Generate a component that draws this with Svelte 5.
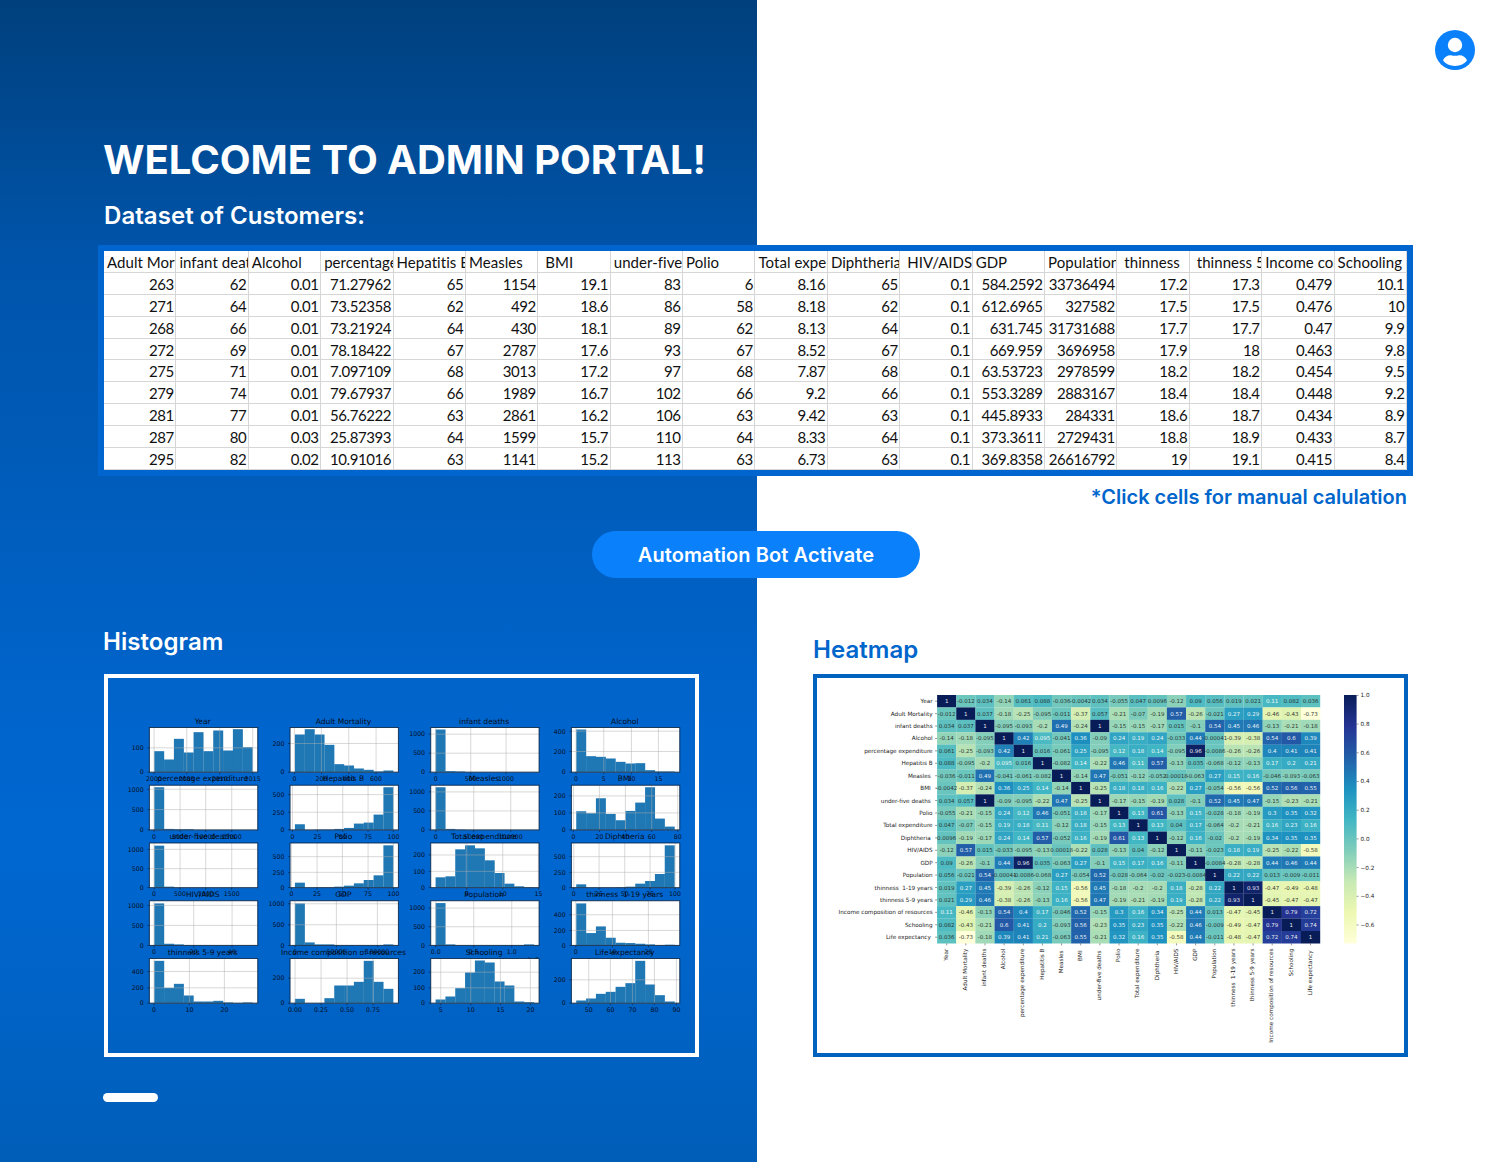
<script>
  const headers = ['Adult Mortality', 'infant deaths', 'Alcohol', 'percentage expenditure', 'Hepatitis B', 'Measles', ' BMI', 'under-five deaths', 'Polio', 'Total expenditure', 'Diphtheria ', ' HIV/AIDS', 'GDP', 'Population', ' thinness', ' thinness 5-9 years', 'Income composition', 'Schooling'];
  const rows = [
    '263 62 0.01 71.27962 65 1154 19.1 83 6 8.16 65 0.1 584.2592 33736494 17.2 17.3 0.479 10.1',
    '271 64 0.01 73.52358 62 492 18.6 86 58 8.18 62 0.1 612.6965 327582 17.5 17.5 0.476 10',
    '268 66 0.01 73.21924 64 430 18.1 89 62 8.13 64 0.1 631.745 31731688 17.7 17.7 0.47 9.9',
    '272 69 0.01 78.18422 67 2787 17.6 93 67 8.52 67 0.1 669.959 3696958 17.9 18 0.463 9.8',
    '275 71 0.01 7.097109 68 3013 17.2 97 68 7.87 68 0.1 63.53723 2978599 18.2 18.2 0.454 9.5',
    '279 74 0.01 79.67937 66 1989 16.7 102 66 9.2 66 0.1 553.3289 2883167 18.4 18.4 0.448 9.2',
    '281 77 0.01 56.76222 63 2861 16.2 106 63 9.42 63 0.1 445.8933 284331 18.6 18.7 0.434 8.9',
    '287 80 0.03 25.87393 64 1599 15.7 110 64 8.33 64 0.1 373.3611 2729431 18.8 18.9 0.433 8.7',
    '295 82 0.02 10.91016 63 1141 15.2 113 63 6.73 63 0.1 369.8358 26616792 19 19.1 0.415 8.4'
  ].map((r) => r.split(' '));

  // Each plot: title, bar heights, x ticks, y ticks.
  const plots = [
    { t: 'Year', b: [63, 38, 100, 59, 120, 63, 125, 65, 129, 75], x: [[14, '2000'], [112, '2005'], [211, '2010'], [310, '2015']], y: [[0, '0'], [73, '100']] },
    { t: 'Adult Mortality', b: [113, 129, 113, 82, 24, 20, 11, 7, 2, 5], x: [[13, '0'], [94, '200'], [176, '400'], [258, '600']], y: [[0, '0'], [86, '200']] },
    { t: 'infant deaths', b: [128, 3, 2, 0, 0, 0, 0, 0, 0, 0], x: [[15, '0'], [120, '500'], [226, '1000']], y: [[0, '0'], [57, '500'], [114, '1000']] },
    { t: 'Alcohol', b: [128, 48, 46, 41, 31, 26, 27, 6, 2, 2], x: [[14, '0'], [97, '5'], [180, '10'], [261, '15']], y: [[0, '0'], [62, '200'], [123, '400']] },
    { t: 'percentage expenditure', b: [128, 3, 2, 2, 0, 0, 0, 0, 0, 0], x: [[14, '0'], [92, '5000'], [169, '10000'], [247, '15000']], y: [[0, '0'], [61, '500'], [122, '1000']] },
    { t: 'Hepatitis B', b: [17, 0, 1, 1, 3, 6, 19, 22, 46, 128], x: [[7, '0'], [82, '25'], [158, '50'], [234, '75'], [310, '100']], y: [[0, '0'], [53, '250'], [106, '500']] },
    { t: 'Measles', b: [128, 3, 1, 0, 0, 0, 0, 0, 0, 0], x: [[15, '0'], [129, '50000'], [240, '100000']], y: [[0, '0'], [57, '500'], [114, '1000']] },
    { t: 'BMI', b: [56, 50, 95, 48, 29, 57, 82, 128, 34, 10], x: [[6, '0'], [84, '20'], [162, '40'], [241, '60'], [319, '80']], y: [[0, '0'], [51, '100'], [102, '200']] },
    { t: 'under-five deaths', b: [126, 3, 0, 0, 0, 0, 0, 0, 0, 0], x: [[14, '0'], [92, '500'], [169, '1000'], [247, '1500']], y: [[0, '0'], [57, '500'], [115, '1000']] },
    { t: 'Polio', b: [15, 0, 1, 1, 3, 6, 13, 23, 37, 127], x: [[4, '0'], [81, '25'], [157, '50'], [234, '75'], [310, '100']], y: [[0, '0'], [46, '250'], [93, '500']] },
    { t: 'Total expenditure', b: [31, 34, 115, 127, 118, 82, 44, 12, 4, 1], x: [[108, '5'], [216, '10'], [323, '15']], y: [[0, '0'], [49, '100'], [98, '200']] },
    { t: 'Diphtheria', b: [10, 0, 0, 0, 1, 3, 12, 20, 41, 127], x: [[7, '0'], [83, '25'], [160, '50'], [236, '75'], [311, '100']], y: [[0, '0'], [46, '250'], [93, '500']] },
    { t: 'HIV/AIDS', b: [126, 5, 3, 1, 1, 0, 0, 0, 0, 1], x: [[14, '0'], [133, '20'], [248, '40']], y: [[0, '0'], [60, '500'], [120, '1000']] },
    { t: 'GDP', b: [126, 9, 3, 3, 1, 1, 0, 0, 0, 3], x: [[15, '0'], [139, '50000'], [262, '100000']], y: [[0, '0'], [62, '500'], [125, '1000']] },
    { t: 'Population', b: [127, 3, 0, 0, 0, 0, 0, 0, 0, 3], x: [[15, '0.0'], [129, '0.5'], [243, '1.0']], y: [[0, '0'], [56, '500'], [112, '1000']], offset: '1e9' },
    { t: 'thinness  1-19 years', b: [126, 37, 57, 23, 8, 7, 5, 3, 0, 2], x: [[13, '0'], [123, '10'], [231, '20']], y: [[0, '0'], [45, '200'], [92, '400']] },
    { t: 'thinness 5-9 years', b: [127, 46, 58, 23, 5, 5, 7, 2, 0, 2], x: [[14, '0'], [120, '10'], [225, '20']], y: [[0, '0'], [46, '200'], [95, '400']] },
    { t: 'Income composition of resources', b: [13, 0, 0, 15, 53, 53, 64, 127, 64, 43], x: [[15, '0.00'], [93, '0.25'], [171, '0.50'], [249, '0.75']], y: [[0, '0'], [75, '200']] },
    { t: 'Schooling', b: [11, 20, 45, 92, 128, 122, 65, 53, 5, 3], x: [[30, '5'], [120, '10'], [209, '15'], [299, '20']], y: [[0, '0'], [46, '100'], [93, '200']] },
    { t: 'Life expectancy', b: [8, 14, 28, 34, 49, 60, 127, 56, 24, 5], x: [[52, '50'], [117, '60'], [183, '70'], [249, '80'], [315, '90']], y: [[0, '0'], [70, '200']] }
  ];
  const barW = 29.5;

  const names = ['Year', 'Adult Mortality', 'infant deaths', 'Alcohol', 'percentage expenditure', 'Hepatitis B', 'Measles ', ' BMI ', 'under-five deaths ', 'Polio', 'Total expenditure', 'Diphtheria ', ' HIV/AIDS', 'GDP', 'Population', ' thinness  1-19 years', ' thinness 5-9 years', 'Income composition of resources', 'Schooling', 'Life expectancy '];
  // Upper triangle of the correlation matrix, diagonal included.
  const upper = [
    '1 -0.012 0.034 -0.14 0.061 0.088 -0.036 -0.0042 0.034 -0.055 0.047 0.0096 -0.12 0.09 0.056 0.019 0.021 0.11 0.082 0.036',
    '1 0.037 -0.18 -0.25 -0.095 -0.011 -0.37 0.057 -0.21 -0.07 -0.19 0.57 -0.26 -0.021 0.27 0.29 -0.46 -0.43 -0.73',
    '1 -0.095 -0.093 -0.2 0.49 -0.24 1 -0.15 -0.15 -0.17 0.015 -0.1 0.54 0.45 0.46 -0.13 -0.21 -0.18',
    '1 0.42 0.095 -0.041 0.36 -0.09 0.24 0.19 0.24 -0.033 0.44 -0.00041 -0.39 -0.38 0.54 0.6 0.39',
    '1 0.016 -0.061 0.25 -0.095 0.12 0.18 0.14 -0.095 0.96 -0.0086 -0.26 -0.26 0.4 0.41 0.41',
    '1 -0.082 0.14 -0.22 0.46 0.11 0.57 -0.13 0.035 -0.068 -0.12 -0.13 0.17 0.2 0.21',
    '1 -0.14 0.47 -0.051 -0.12 -0.052 0.00018 -0.063 0.27 0.15 0.16 -0.046 -0.093 -0.063',
    '1 -0.25 0.18 0.18 0.16 -0.22 0.27 -0.054 -0.56 -0.56 0.52 0.56 0.55',
    '1 -0.17 -0.15 -0.19 0.028 -0.1 0.52 0.45 0.47 -0.15 -0.23 -0.21',
    '1 0.13 0.61 -0.13 0.15 -0.028 -0.18 -0.19 0.3 0.35 0.32',
    '1 0.13 0.04 0.17 -0.064 -0.2 -0.21 0.16 0.23 0.16',
    '1 -0.12 0.16 -0.02 -0.2 -0.19 0.34 0.35 0.35',
    '1 -0.11 -0.023 0.18 0.19 -0.25 -0.22 -0.58',
    '1 -0.0084 -0.28 -0.28 0.44 0.46 0.44',
    '1 0.22 0.22 0.013 -0.009 -0.011',
    '1 0.93 -0.47 -0.49 -0.48',
    '1 -0.45 -0.47 -0.47',
    '1 0.79 0.72',
    '1 0.74',
    '1'
  ].map((r) => r.split(' '));
  const ramp = [[255, 255, 217], [237, 248, 177], [199, 233, 180], [127, 205, 187], [65, 182, 196], [29, 145, 192], [34, 94, 168], [37, 52, 148], [8, 29, 88]];
  const rgb = (c) => `rgb(${c.join(',')})`;
  function shade(v) {
    const p = Math.max(0, Math.min(1, (v + 0.73) / 1.73)) * 8;
    const i = Math.min(7, Math.floor(p));
    return rgb(ramp[i].map((c, k) => Math.round(c + (ramp[i + 1][k] - c) * (p - i))));
  }
  const cw = 19.15;
  const ch = 12.42;
  const cells = [];
  for (let r = 0; r < 20; r++)
    for (let c = 0; c < 20; c++) {
      const s = upper[Math.min(r, c)][Math.abs(c - r)];
      cells.push({ r, c, s, fill: shade(+s), light: +s >= 0.095 });
    }
  const scale = ['1.0', '0.8', '0.6', '0.4', '0.2', '0.0', '−0.2', '−0.4', '−0.6'];
</script>

<main>
  <button class="user" aria-label="Account">
    <svg viewBox="0 0 40 40" width="40" height="40">
      <circle cx="20" cy="20" r="20" fill="#0a80fb" />
      <circle cx="20" cy="15" r="7.2" fill="#fff" />
      <path d="M8 30.6C9.200 27 12.500 25 16 25.200Q20 26.400 24 25.200C27.500 25 30.800 27 32 30.600C29.500 33.900 25.500 36 20 36S10.500 33.900 8 30.600z" fill="#fff" />
    </svg>
  </button>
  <h1>WELCOME TO ADMIN PORTAL!</h1>
  <h2 class="sub">Dataset of Customers:</h2>

  <div class="sheet">
    {#each headers as h}<div class="cell head">{h}</div>{/each}
    {#each rows as row}
      {#each row as v}<div class="cell">{v}</div>{/each}
    {/each}
  </div>
  <p class="note">*Click cells for manual calulation</p>
  <button class="bot">Automation Bot Activate</button>

  <div class="charts">
    <section>
      <h2 class="hist">Histogram</h2>
      <div class="frame white">
        <svg class="plot" viewBox="108 678 587 375">
          {#each plots as p, i}
            <g transform="translate({149.4 + (i % 4) * 140.67} {727.5 + Math.floor(i / 4) * 57.75}) scale(0.33333)">
              {#if p.offset}<text class="lab" x="325" y="185" text-anchor="end">{p.offset}</text>{/if}
              <rect width="325" height="134" fill="#fff" />
              {#each p.b as h, k}
                {#if h}<rect x={14.5 + k * barW} y={134 - h} width={barW + 0.4} height={h} fill="#1f77b4" />{/if}
              {/each}
              {#each p.x as [x, label]}
                <path class="grid" d="M{x} 0V134" />
                <path class="tick" d="M{x} 134v6" />
                <text class="lab" {x} y="160" text-anchor="middle">{label}</text>
              {/each}
              {#each p.y as [y, label]}
                <path class="grid" d="M0 {134 - y}H325" />
                <path class="tick" d="M-6 {134 - y}h6" />
                <text class="lab" x="-17" y={141 - y} text-anchor="end">{label}</text>
              {/each}
              <rect class="box" width="325" height="134" />
              <text class="title" x="160" y="-12" text-anchor="middle">{p.t}</text>
            </g>
          {/each}
        </svg>
      </div>
    </section>
    <section>
      <h2 class="heat">Heatmap</h2>
      <div class="frame blue">
        <svg class="plot" viewBox="817 678 587 375">
          <defs>
            <linearGradient id="ramp" x1="0" y1="1" x2="0" y2="0">
              {#each ramp as c, i}<stop offset={i / 8} stop-color={rgb(c)} />{/each}
            </linearGradient>
          </defs>
          <g transform="translate(937.1 695)">
            {#each cells as d}
              <rect x={d.c * cw} y={d.r * ch} width={cw + 0.1} height={ch + 0.1} fill={d.fill} />
            {/each}
            {#each cells as d}
              <text class="val" class:light={d.light} x={(d.c + 0.5) * cw} y={(d.r + 0.5) * ch + 2} text-anchor="middle">{d.s}</text>
            {/each}
            {#each names as n, i}
              <path class="ht" d="M-2 {(i + 0.5) * ch}h2M{(i + 0.5) * cw} {20 * ch}v2" />
              <text class="name" x="-4.500" y={(i + 0.5) * ch + 2} text-anchor="end">{n}</text>
              <text class="name" transform="translate({(i + 0.5) * cw + 1.2} 253.600) rotate(-90)" text-anchor="end">{n}</text>
            {/each}
          </g>
          <rect x="1344" y="695" width="12.6" height="248.400" fill="url(#ramp)" />
          {#each scale as s, i}
            <path class="ht" d="M1356.600 {695.4 + i * 28.7}h2" />
            <text class="name" x="1360.500" y={697.3 + i * 28.7}>{s}</text>
          {/each}
        </svg>
      </div>
    </section>
  </div>
  <div class="pill"></div>
</main>

<style>
  :global(body) { margin: 0; }
  main {
    box-sizing: border-box;
    width: 1512px;
    height: 1162px;
    overflow: hidden;
    display: flex;
    flex-direction: column;
    font-family: Inter, sans-serif;
    background: linear-gradient(180deg, #00407d 0%, #0054aa 22%, #005ab6 37%, #0064cb 60%, #0067d1 73%, #0063c7 85%, #005eb8 100%) 0 0 / 757px 100% no-repeat #fff;
  }
  button { border: 0; padding: 0; font-family: inherit; }
  .user { align-self: flex-end; width: 40px; height: 40px; margin: 30px 37px 0 0; background: none; }
  .user svg { display: block; }
  h1, h2, p { margin: 0; white-space: nowrap; }
  h1 { margin: 65px 0 0 103px; font-size: 40px; line-height: 50px; font-weight: 700; letter-spacing: -0.03px; color: #fff; }
  h2 { font-size: 24px; line-height: 30px; font-weight: 600; letter-spacing: 0.05px; }
  .sub { margin: 16px 0 0 104px; color: #fff; }
  .sheet {
    box-sizing: border-box;
    width: 1315px;
    height: 231px;
    margin: 14px 0 0 98px;
    border: 6px solid #0065ce;
    background: #fff;
    display: grid;
    grid-template-columns: repeat(18, 1fr);
    grid-template-rows: repeat(10, 1fr);
  }
  .cell {
    min-width: 0;
    overflow: hidden;
    white-space: pre;
    box-sizing: border-box;
    border-right: 1px solid #d6d6d6;
    border-bottom: 1px solid #d6d6d6;
    padding: 0 1.6px 0 3px;
    text-align: right;
    font: 15px/22.4px Lato, sans-serif;
    letter-spacing: -0.44px;
    color: #111;
  }
  .head { text-align: left; padding-right: 0; letter-spacing: 0.05px; line-height: 23px; }
  .note { align-self: flex-end; margin: 8px 105px 0 0; font-size: 20px; line-height: 26px; font-weight: 600; color: #0066cc; }
  .bot { align-self: center; width: 328px; height: 47px; margin-top: 21px; border-radius: 24px; background: #0a80fb; color: #fff; font-size: 20px; font-weight: 600; letter-spacing: 0.08px; }
  .charts { display: flex; gap: 114px; margin: 48px 0 0 104px; }
  section { width: 595px; }
  .hist { color: #fff; padding-top: 1px; padding-bottom: 17px; margin-left: -1px; }
  .heat { color: #0066cc; padding-top: 9px; padding-bottom: 9px; }
  .frame { box-sizing: border-box; width: 595px; height: 383px; border: 4px solid #fff; }
  .blue { border-color: #0062bf; background: #fff; }
  .plot { display: block; width: 587px; height: 375px; font-family: 'DejaVu Sans', sans-serif; }
  .plot text { white-space: pre; }
  .lab { font-size: 18.8px; fill: #000; opacity: 0.85; }
  .title { font-size: 22.7px; fill: #000; opacity: 0.88; }
  .grid { stroke: #b0b0b0; stroke-width: 2.4; opacity: 0.6; }
  .tick { stroke: #000; stroke-width: 2; opacity: 0.7; }
  .box { fill: none; stroke: #001a38; stroke-width: 3; opacity: 0.8; }
  .val { font-size: 5.5px; fill: #262626; opacity: 0.9; }
  .light { fill: #fff; }
  .name { font-size: 5.7px; fill: #1a1a1a; }
  .ht { stroke: #333; stroke-width: 0.5; fill: none; }
  .pill { width: 55px; height: 9px; margin: 36px 0 0 103px; border-radius: 5px; background: #fff; }
</style>
